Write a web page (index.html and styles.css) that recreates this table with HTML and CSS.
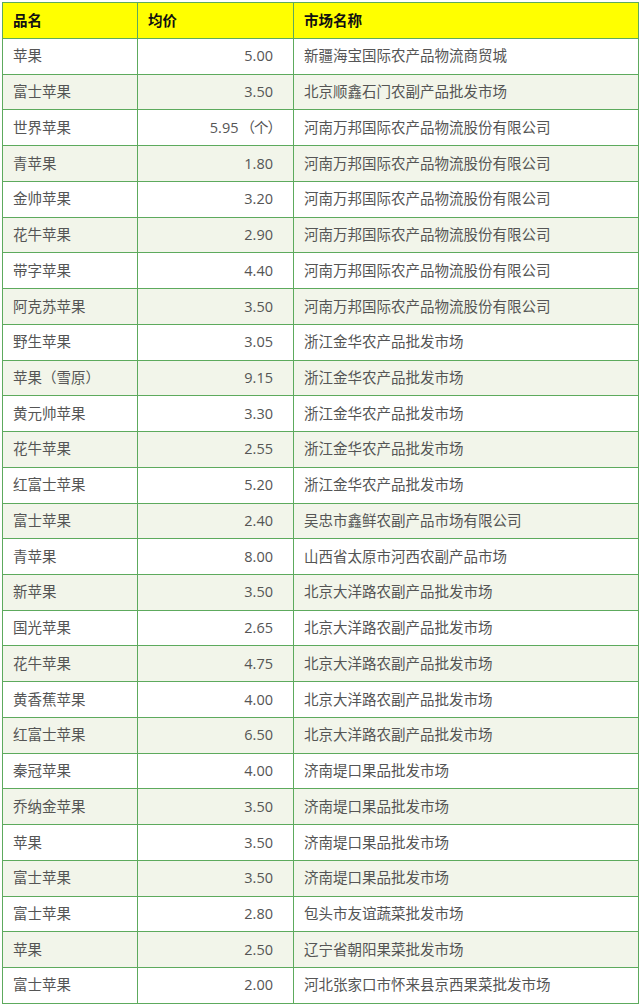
FILE: index.html
```html
<!DOCTYPE html>
<html lang="zh">
<head>
<meta charset="utf-8">
<link rel="stylesheet" href="styles.css">
</head>
<body>
<table class="price-table">
  <colgroup>
    <col class="c-name">
    <col class="c-price">
    <col class="c-market">
  </colgroup>
  <thead>
    <tr><th>品名</th><th>均价</th><th>市场名称</th></tr>
  </thead>
  <tbody>
    <tr><td>苹果</td><td class="num">5.00</td><td>新疆海宝国际农产品物流商贸城</td></tr>
    <tr><td>富士苹果</td><td class="num">3.50</td><td>北京顺鑫石门农副产品批发市场</td></tr>
    <tr><td>世界苹果</td><td class="num num-unit">5.95<span class="unit">（个）</span></td><td>河南万邦国际农产品物流股份有限公司</td></tr>
    <tr><td>青苹果</td><td class="num">1.80</td><td>河南万邦国际农产品物流股份有限公司</td></tr>
    <tr><td>金帅苹果</td><td class="num">3.20</td><td>河南万邦国际农产品物流股份有限公司</td></tr>
    <tr><td>花牛苹果</td><td class="num">2.90</td><td>河南万邦国际农产品物流股份有限公司</td></tr>
    <tr><td>带字苹果</td><td class="num">4.40</td><td>河南万邦国际农产品物流股份有限公司</td></tr>
    <tr><td>阿克苏苹果</td><td class="num">3.50</td><td>河南万邦国际农产品物流股份有限公司</td></tr>
    <tr><td>野生苹果</td><td class="num">3.05</td><td>浙江金华农产品批发市场</td></tr>
    <tr><td>苹果（雪原）</td><td class="num">9.15</td><td>浙江金华农产品批发市场</td></tr>
    <tr><td>黄元帅苹果</td><td class="num">3.30</td><td>浙江金华农产品批发市场</td></tr>
    <tr><td>花牛苹果</td><td class="num">2.55</td><td>浙江金华农产品批发市场</td></tr>
    <tr><td>红富士苹果</td><td class="num">5.20</td><td>浙江金华农产品批发市场</td></tr>
    <tr><td>富士苹果</td><td class="num">2.40</td><td>吴忠市鑫鲜农副产品市场有限公司</td></tr>
    <tr><td>青苹果</td><td class="num">8.00</td><td>山西省太原市河西农副产品市场</td></tr>
    <tr><td>新苹果</td><td class="num">3.50</td><td>北京大洋路农副产品批发市场</td></tr>
    <tr><td>国光苹果</td><td class="num">2.65</td><td>北京大洋路农副产品批发市场</td></tr>
    <tr><td>花牛苹果</td><td class="num">4.75</td><td>北京大洋路农副产品批发市场</td></tr>
    <tr><td>黄香蕉苹果</td><td class="num">4.00</td><td>北京大洋路农副产品批发市场</td></tr>
    <tr><td>红富士苹果</td><td class="num">6.50</td><td>北京大洋路农副产品批发市场</td></tr>
    <tr><td>秦冠苹果</td><td class="num">4.00</td><td>济南堤口果品批发市场</td></tr>
    <tr><td>乔纳金苹果</td><td class="num">3.50</td><td>济南堤口果品批发市场</td></tr>
    <tr><td>苹果</td><td class="num">3.50</td><td>济南堤口果品批发市场</td></tr>
    <tr><td>富士苹果</td><td class="num">3.50</td><td>济南堤口果品批发市场</td></tr>
    <tr><td>富士苹果</td><td class="num">2.80</td><td>包头市友谊蔬菜批发市场</td></tr>
    <tr><td>苹果</td><td class="num">2.50</td><td>辽宁省朝阳果菜批发市场</td></tr>
    <tr><td>富士苹果</td><td class="num">2.00</td><td>河北张家口市怀来县京西果菜批发市场</td></tr>
  </tbody>
</table>
</body>
</html>
```
FILE: styles.css
```css
html, body {
  margin: 0;
  padding: 0;
  background: #ffffff;
}

body {
  padding: 2px;
  font-family: "Open Sans", "Noto Sans CJK SC", sans-serif;
  font-size: 14.5px;
  color: #555555;
}

.price-table {
  width: 636px;
  border-collapse: collapse;
  table-layout: fixed;
}

.c-name { width: 135px; }
.c-price { width: 156px; }
.c-market { width: 345px; }

.price-table th,
.price-table td {
  border: 1px solid #5daa5d;
  padding: 0 10px;
  text-align: left;
  vertical-align: middle;
  white-space: nowrap;
  line-height: 20px;
}

.price-table thead tr {
  height: 36px;
}

.price-table th {
  background: #ffff00;
  color: #111111;
  font-weight: bold;
}

.price-table tbody tr {
  height: 35.74px;
}

.price-table tbody tr:nth-child(even) td {
  background: #f2f5ea;
}

.price-table td.num {
  text-align: right;
  padding-right: 20px;
}

.price-table td.num-unit {
  padding-right: 12px;
}

.unit {
  margin-left: 2px;
  letter-spacing: -1px;
}
```
